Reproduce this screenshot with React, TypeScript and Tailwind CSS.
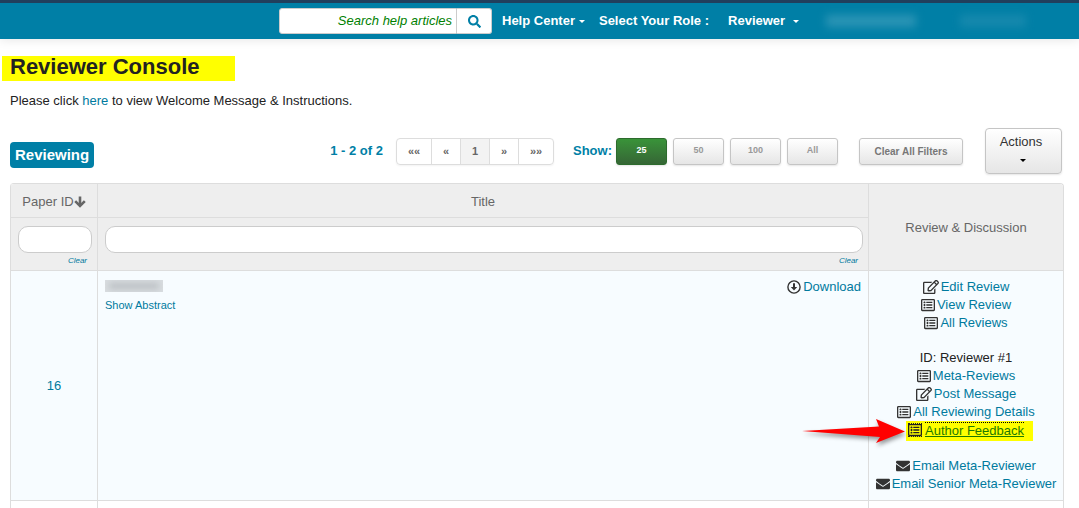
import type { ReactNode } from "react"
import { FaEnvelope, FaRegEdit, FaRegListAlt, FaSearch } from "react-icons/fa"

const pages = [
  { label: "««", className: "w-[34px]" },
  { label: "«", className: "w-7" },
  { label: "1", className: "w-7 bg-[#f3f3f3]" },
  { label: "»", className: "w-7" },
  { label: "»»", className: "w-[34px]" },
]

const pageSizes = ["25", "50", "100", "All"]

function Caret({ className = "" }: { className?: string }) {
  return (
    <span
      className={`inline-block border-x-[3px] border-t-[3px] border-x-transparent border-t-current ${className}`}
    />
  )
}

function SortIcon() {
  return (
    <svg viewBox="0 0 12 12" className="size-3" fill="none" stroke="currentColor" aria-hidden="true">
      <path d="M6 0.5V9" strokeWidth="2.6" />
      <path d="M1.2 5.2L6 10L10.8 5.2" strokeWidth="2.6" />
    </svg>
  )
}

function DownloadIcon() {
  return (
    <svg viewBox="0 0 14 14" className="size-[14px]" fill="none" stroke="#333" aria-hidden="true">
      <circle cx="7" cy="7" r="6.1" strokeWidth="1.4" />
      <path d="M7 3.2V8" strokeWidth="2" />
      <path d="M3.8 6.9H10.2L7 10.6Z" fill="#333" stroke="none" />
    </svg>
  )
}

function IconLink({ icon, children }: { icon: ReactNode; children: ReactNode }) {
  return (
    <div className="flex h-[18px] items-center justify-center gap-0.5 whitespace-nowrap text-[#333]">
      {icon}
      <a href="#" className="text-[#007a9e] hover:underline">
        {children}
      </a>
    </div>
  )
}

function Arrow() {
  return (
    <svg
      viewBox="0 0 110 34"
      className="absolute top-1/2 right-full h-[34px] w-[110px] -translate-y-1/2 drop-shadow-[1px_3px_2px_rgba(0,0,0,0.4)]"
      aria-hidden="true"
    >
      <path d="M6 17L83 12.5L80 5L109 17.5L80 29L84 23Z" fill="#f00" />
    </svg>
  )
}

function Navbar() {
  return (
    <header className="border-t-[3px] border-[#213f5c] bg-[#007fa6] shadow-[0_1px_10px_rgba(0,0,0,0.1)]">
      <nav className="flex h-9 items-center pl-[279px] font-bold whitespace-nowrap text-white">
        <form className="flex h-[26px] shrink-0">
          <input
            type="text"
            aria-label="Search help articles"
            placeholder="Search help articles"
            className="w-[178px] rounded-l-[3px] border border-[#ccc] bg-white px-1 text-right font-normal italic outline-none placeholder:text-[#008000]"
          />
          <button
            type="button"
            aria-label="Search"
            className="flex w-[35px] items-center justify-center rounded-r-[3px] border border-l-0 border-[#ccc] bg-white text-[#007fa6]"
          >
            <FaSearch className="size-[13px]" />
          </button>
        </form>
        <a href="#" className="ml-[10px] flex items-center gap-1">
          Help Center
          <Caret />
        </a>
        <span className="ml-[14px]">Select Your Role :</span>
        <a href="#" className="ml-[19px] flex items-center gap-2">
          Reviewer
          <Caret />
        </a>
        <span className="ml-[27px] h-3 w-[90px] bg-[#48a3c0]/60 blur-[4px]" />
        <span className="ml-[44px] h-3 w-[66px] bg-[#2b93b5]/50 blur-[4px]" />
      </nav>
    </header>
  )
}

function Toolbar() {
  return (
    <div className="mt-[18px] flex h-[46px] items-center whitespace-nowrap">
      <h2 className="mt-2 rounded-[4px] bg-[#007fa6] px-[5px] text-[15px] leading-[26px] font-bold text-white">
        Reviewing
      </h2>
      <span className="ml-auto font-bold text-[#007fa6]">1 - 2 of 2</span>
      <div className="ml-[13px] flex h-[27px] divide-x divide-[#ddd] rounded-[4px] border border-[#ddd] text-[11px] font-bold text-[#666] shadow-[0_1px_2px_rgba(0,0,0,0.05)]">
        {pages.map((page) => (
          <button key={page.label} type="button" className={`box-content ${page.className}`}>
            {page.label}
          </button>
        ))}
      </div>
      <span className="ml-[19px] font-bold text-[#007fa6]">Show:</span>
      <div className="ml-1 flex gap-[6px] text-[9px] font-bold">
        {pageSizes.map((size) => (
          <button
            key={size}
            type="button"
            className={`h-[27px] w-[51px] rounded-[3px] border shadow-[0_1px_2px_rgba(0,0,0,0.1)] ${
              size === "25"
                ? "border-[#2d6b2d] bg-linear-to-b from-[#399339] to-[#356635] text-white"
                : "border-[#c5c5c5] bg-linear-to-b from-white to-[#e6e6e6] text-[#999]"
            }`}
          >
            {size}
          </button>
        ))}
      </div>
      <button
        type="button"
        className="ml-[21px] h-[27px] w-[104px] rounded-[3px] border border-[#c5c5c5] bg-linear-to-b from-white to-[#e6e6e6] text-[10px] font-bold text-[#777] shadow-[0_1px_2px_rgba(0,0,0,0.1)]"
      >
        Clear All Filters
      </button>
      <button
        type="button"
        className="mr-0.5 ml-[22px] flex h-[46px] w-[77px] flex-col items-center rounded-[4px] border border-[#c5c5c5] bg-linear-to-b from-white to-[#e6e6e6] pt-1 pr-[5px] leading-[18px] text-[#333] shadow-[0_1px_2px_rgba(0,0,0,0.1)]"
      >
        Actions
        <Caret className="mt-2 ml-1 text-black" />
      </button>
    </div>
  )
}

function FilterCell({ label }: { label: string }) {
  return (
    <td className="border-t border-l border-[#ddd] pt-2 pr-[5px] pl-[7px] align-top">
      <input
        type="text"
        aria-label={label}
        className="block h-[27px] w-full rounded-[10px] border border-[#ccc] bg-white px-2 outline-none"
      />
      <a href="#" className="mt-[3px] mr-[5px] block text-right text-[8px] leading-[10px] text-[#007a9e] italic">
        Clear
      </a>
    </td>
  )
}

function PapersTable() {
  return (
    <table className="mt-[9px] w-full table-fixed border-separate border-spacing-0 overflow-hidden rounded-t-[4px] border-t border-r border-[#ddd] text-center">
      <colgroup>
        <col className="w-[87px]" />
        <col />
        <col className="w-[195px]" />
      </colgroup>
      <thead className="bg-[#eee] text-[#666]">
        <tr className="h-[33px]">
          <th className="border-l border-[#ddd] pt-0.5 font-normal">
            <span className="flex items-center justify-center">
              Paper ID
              <SortIcon />
            </span>
          </th>
          <th className="border-l border-[#ddd] pt-0.5 font-normal">Title</th>
          <th rowSpan={2} className="border-l border-[#ddd] pt-0.5 font-normal">
            Review &amp; Discussion
          </th>
        </tr>
        <tr className="h-[53px]">
          <FilterCell label="Filter by paper ID" />
          <FilterCell label="Filter by title" />
        </tr>
      </thead>
      <tbody>
        <tr className="h-[230px] bg-[#f7fcff]">
          <td className="border-t border-l border-[#ddd] text-[#007a9e]">16</td>
          <td className="border-t border-l border-[#ddd] px-[7px] pt-[7px] align-top">
            <div className="flex items-start justify-between">
              <div className="pt-0.5 text-left">
                <div className="h-3 w-[58px] overflow-hidden bg-[#d9dde0]">
                  <div className="mx-1 my-[3px] h-[6px] bg-[#b9bec2] blur-[3px]" />
                </div>
                <a href="#" className="mt-[6px] block text-[11px] leading-[14px] text-[#007a9e]">
                  Show Abstract
                </a>
              </div>
              <IconLink icon={<DownloadIcon />}>Download</IconLink>
            </div>
          </td>
          <td className="border-t border-l border-[#ddd] pt-[7px] align-top">
            <IconLink icon={<FaRegEdit className="size-4" />}>Edit Review</IconLink>
            <IconLink icon={<FaRegListAlt className="size-[14px]" />}>View Review</IconLink>
            <IconLink icon={<FaRegListAlt className="size-[14px]" />}>All Reviews</IconLink>
            <p className="mt-[17px] leading-[18px] text-[#222]">ID: Reviewer #1</p>
            <IconLink icon={<FaRegListAlt className="size-[14px]" />}>Meta-Reviews</IconLink>
            <IconLink icon={<FaRegEdit className="size-4" />}>Post Message</IconLink>
            <IconLink icon={<FaRegListAlt className="size-[14px]" />}>All Reviewing Details</IconLink>
            <div className="relative ml-[37px] flex h-[20px] w-[127px] items-center gap-[3px] bg-[#ff0] pb-[3px] pl-0.5 text-[#222]">
              <Arrow />
              <FaRegListAlt className="size-[14px] outline-1 -outline-offset-1 outline-dotted" />
              <a
                href="#"
                className="border-t border-dotted border-black leading-[15px] whitespace-nowrap text-[#1d7a00] underline"
              >
                Author Feedback
              </a>
            </div>
            <div className="mt-4">
              <IconLink icon={<FaEnvelope className="size-[14px]" />}>Email Meta-Reviewer</IconLink>
              <IconLink icon={<FaEnvelope className="size-[14px]" />}>Email Senior Meta-Reviewer</IconLink>
            </div>
          </td>
        </tr>
        <tr className="h-10">
          <td className="border-t border-l border-[#ddd]" />
          <td className="border-t border-l border-[#ddd]" />
          <td className="border-t border-l border-[#ddd]" />
        </tr>
      </tbody>
    </table>
  )
}

export default function App() {
  return (
    <div className="h-screen overflow-hidden bg-white font-['Liberation_Sans',Arial,sans-serif] text-[13px] text-[#222]">
      <Navbar />
      <main className="pt-[17px] pr-[15px] pl-[10px]">
        <h1 className="-ml-2 w-[233px] bg-[#ff0] pb-1 pl-2 text-[22px] leading-[21px] font-bold whitespace-nowrap text-[#222]">
          Reviewer Console
        </h1>
        <p className="mt-[11px] leading-[18px]">
          Please click{" "}
          <a href="#" className="text-[#007a9e]">
            here
          </a>{" "}
          to view Welcome Message &amp; Instructions.
        </p>
        <Toolbar />
        <PapersTable />
      </main>
    </div>
  )
}
